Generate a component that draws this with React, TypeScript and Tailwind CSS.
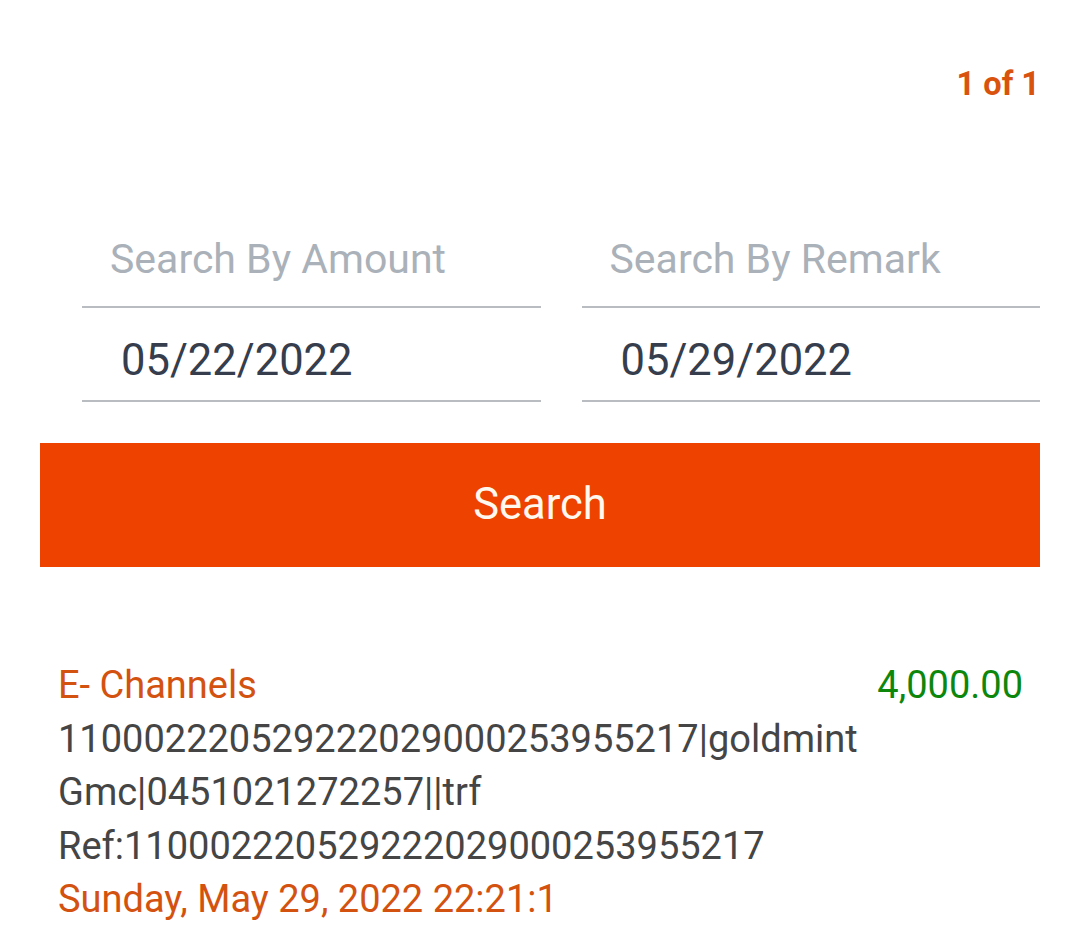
import { useState } from 'react';

const txn = {
  channel: 'E- Channels',
  amount: '4,000.00',
  lines: ['110002220529222029000253955217|goldmint', 'Gmc|0451021272257||trf', 'Ref:110002220529222029000253955217'],
  date: 'Sunday, May 29, 2022 22:21:1',
};

export default function App() {
  const [amount, setAmount] = useState('');
  const [remark, setRemark] = useState('');

  return (
    <div className="min-h-screen bg-white px-[40px] font-['Roboto',sans-serif]">
      {/* Pager */}
      <div className="flex justify-end pt-[64px]">
        <span className="text-[32.5px] font-bold leading-[40px] text-[#d9530f]">1 of 1</span>
      </div>

      {/* Filters */}
      <div className="mt-[108px] grid grid-cols-2 gap-x-[41px] pl-[42px]">
        <input
          value={amount}
          onChange={(e) => setAmount(e.target.value)}
          placeholder="Search By Amount"
          className="h-[96px] w-full border-b-2 border-[#b9bcc0] bg-transparent pl-[28px] text-[41px] text-[#3b4252] outline-none placeholder:text-[#aab1b9]"
        />
        <input
          value={remark}
          onChange={(e) => setRemark(e.target.value)}
          placeholder="Search By Remark"
          className="h-[96px] w-full border-b-2 border-[#b9bcc0] bg-transparent pl-[28px] text-[41px] text-[#3b4252] outline-none placeholder:text-[#aab1b9]"
        />
        <input
          readOnly
          value="05/22/2022"
          className="mt-[12px] h-[82px] w-full border-b-2 border-[#b9bcc0] bg-transparent pl-[39px] text-[43.5px] text-[#363d4c] outline-none"
        />
        <input
          readOnly
          value="05/29/2022"
          className="mt-[12px] h-[82px] w-full border-b-2 border-[#b9bcc0] bg-transparent pl-[39px] text-[43.5px] text-[#363d4c] outline-none"
        />
      </div>

      <button className="mt-[41px] flex h-[124px] w-full items-center justify-center bg-[#ed4200] text-[43.5px] text-[#fff8ee]">
        Search
      </button>

      {/* Results */}
      <div className="mt-[92px] pl-[18px] pr-[17px] text-[38px] leading-[53.5px]">
        <div className="flex items-start justify-between">
          <div>
            <div className="text-[#d4520f]">{txn.channel}</div>
            {txn.lines.map((l) => (
              <div key={l} className="text-[#454545]">{l}</div>
            ))}
            <div className="text-[#d4520f]">{txn.date}</div>
          </div>
          <div className="text-[#0c870c]">{txn.amount}</div>
        </div>
      </div>
    </div>
  );
}
